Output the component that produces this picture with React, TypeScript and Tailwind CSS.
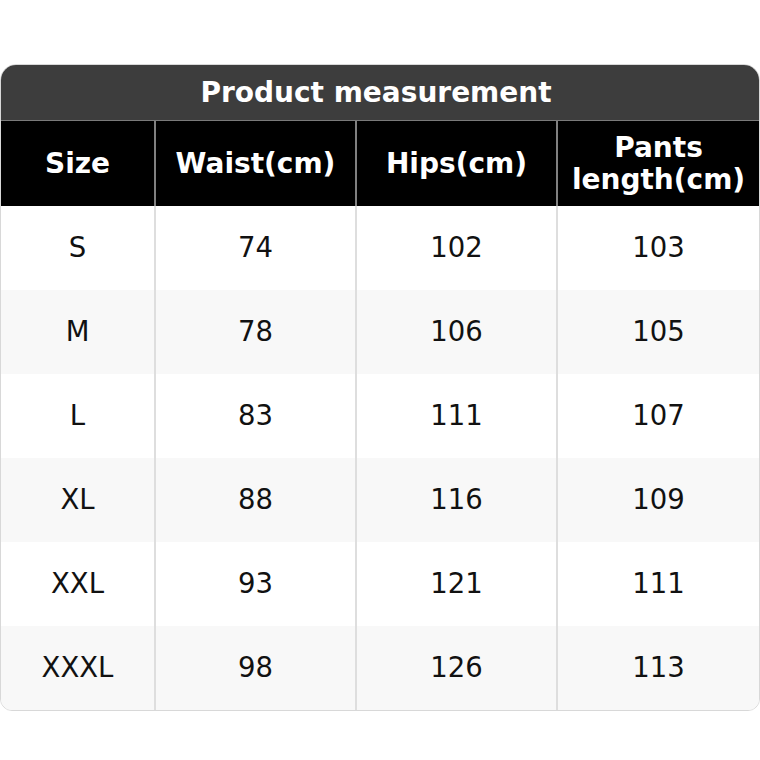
const rows = [
  ["S", "74", "102", "103"],
  ["M", "78", "106", "105"],
  ["L", "83", "111", "107"],
  ["XL", "88", "116", "109"],
  ["XXL", "93", "121", "111"],
  ["XXXL", "98", "126", "113"],
];

const font = { fontFamily: '"DejaVu Sans", Verdana, sans-serif' };

export default function App() {
  return (
    <div className="w-[760px] h-[760px] bg-white pt-[64px]" style={font}>
      <div className="w-[760px] rounded-t-[16px] rounded-b-[12px] border border-[#d8d8d8] overflow-hidden">
        <div className="h-[56px] bg-[#3d3d3d] border-b border-[#7a7a7a] flex items-center justify-center text-white font-bold text-[28px] pr-[8px]">
          Product measurement
        </div>
        <div className="grid grid-cols-[153px_201px_201px_1fr] h-[85px] bg-black text-white font-bold text-[28px] leading-[32px]">
          <div className="flex items-center justify-center">Size</div>
          <div className="flex items-center justify-center border-l-2 border-[#808080]">Waist(cm)</div>
          <div className="flex items-center justify-center border-l-2 border-[#808080]">Hips(cm)</div>
          <div className="flex items-center justify-center text-center border-l-2 border-[#808080]">
            Pants
            <br />
            length(cm)
          </div>
        </div>
        {rows.map((r, i) => (
          <div
            key={r[0]}
            className={`grid grid-cols-[153px_201px_201px_1fr] h-[84px] text-[27.5px] text-[#111] ${
              i % 2 === 1 ? "bg-[#f8f8f8]" : "bg-white"
            }`}
          >
            <div className="flex items-center justify-center">{r[0]}</div>
            <div className="flex items-center justify-center border-l-2 border-[#dedede]">{r[1]}</div>
            <div className="flex items-center justify-center border-l-2 border-[#dedede]">{r[2]}</div>
            <div className="flex items-center justify-center border-l-2 border-[#dedede]">{r[3]}</div>
          </div>
        ))}
      </div>
    </div>
  );
}
